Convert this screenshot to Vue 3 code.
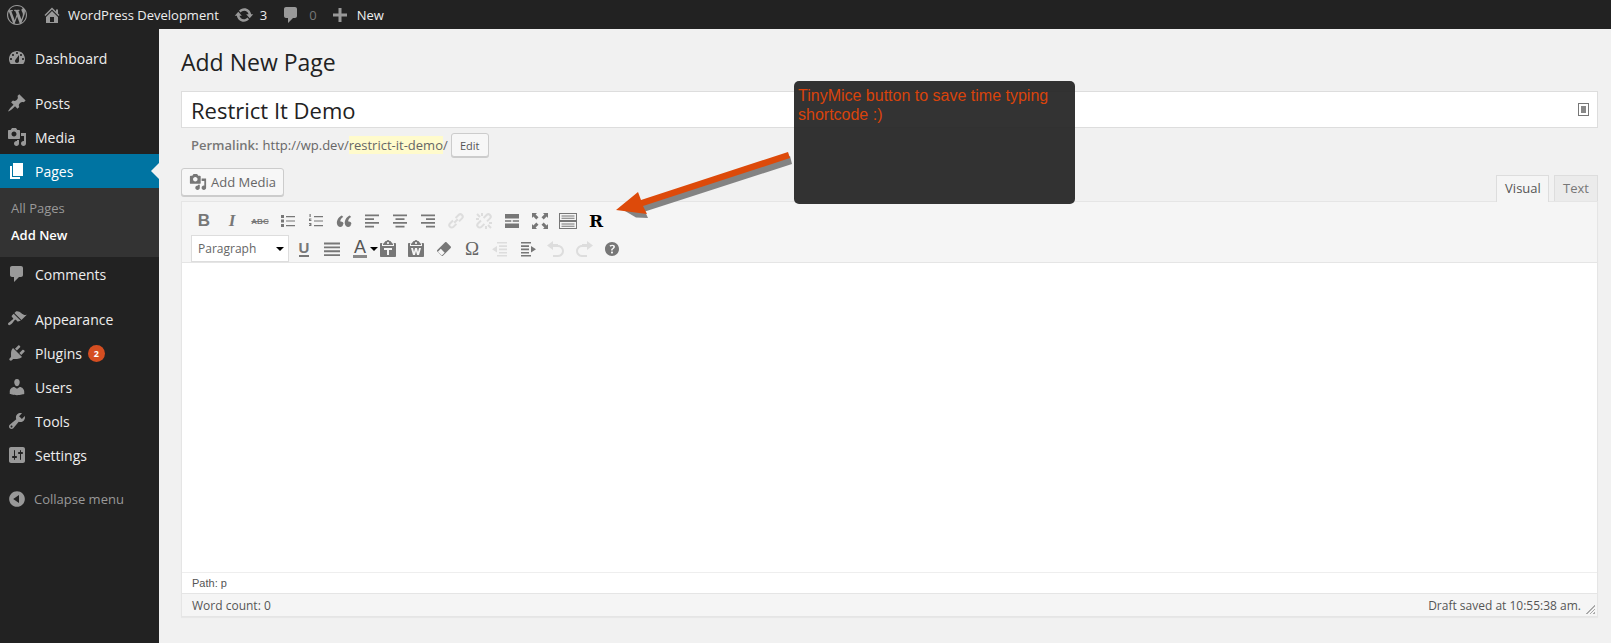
<script setup>
const paths = {
  wp: 'M20 10c0-5.51-4.5-10-10-10C4.48 0 0 4.49 0 10c0 5.52 4.48 10 10 10 5.5 0 10-4.48 10-10zM7.78 15.37L4.37 6.22c.55-.02 1.17-.08 1.17-.08.5-.06.44-1.13-.06-1.11 0 0-1.45.11-2.37.11-.18 0-.37 0-.58-.01C4.12 2.69 6.87 1.11 10 1.11c2.33 0 4.45.87 6.05 2.34-.68-.11-1.65.39-1.65 1.58 0 .74.45 1.36.9 2.1.35.61.55 1.36.55 2.46 0 1.49-1.4 5-1.4 5l-3.03-8.37c.54-.02.82-.17.82-.17.5-.05.44-1.25-.06-1.22 0 0-1.44.12-2.38.12-.87 0-2.33-.12-2.33-.12-.5-.03-.56 1.2-.06 1.22l.92.08 1.26 3.41zM17.41 10c.24-.64.74-1.87.43-4.25.7 1.29 1.05 2.71 1.05 4.25 0 3.29-1.73 6.24-4.4 7.78.97-2.59 1.94-5.2 2.92-7.78zM6.1 18.09C3.12 16.65 1.11 13.53 1.11 10c0-1.3.23-2.48.72-3.59C3.25 10.3 4.67 14.2 6.1 18.09zm4.03-6.63l2.58 6.98c-.86.29-1.76.45-2.71.45-.79 0-1.57-.11-2.29-.33.81-2.38 1.62-4.74 2.42-7.1z',
  home: 'M16 8.5l1.53 1.53-1.06 1.06L10 4.62l-6.47 6.47-1.06-1.06L10 2.5l4 4v-2h2v4zm-6-2.46l6 5.99V18H4v-5.97zM12 17v-5H8v5h4z',
  update: 'M10.2 3.28c3.53 0 6.43 2.61 6.92 6h2.08l-3.5 4-3.5-4h2.32c-.45-1.97-2.21-3.45-4.32-3.45-1.45 0-2.73.71-3.54 1.78L4.95 5.66C6.23 4.2 8.11 3.28 10.2 3.28zm-.4 13.44c-3.52 0-6.43-2.61-6.92-6H.8l3.5-4c1.17 1.33 2.33 2.67 3.5 4H5.48c.45 1.97 2.21 3.45 4.32 3.45 1.45 0 2.73-.71 3.54-1.78l1.71 1.95c-1.28 1.46-3.15 2.38-5.25 2.38z',
  comment: 'M5 2h9c1.1 0 2 .9 2 2v7c0 1.1-.9 2-2 2h-2l-5 5v-5H5c-1.1 0-2-.9-2-2V4c0-1.1.9-2 2-2z',
  plus: 'M17 8.5v3h-5.5V17h-3v-5.5H3v-3h5.5V3h3v5.5z',
  dashboard: 'M3.76 16h12.48c1.1-1.37 1.76-3.11 1.76-5 0-4.42-3.58-8-8-8s-8 3.58-8 8c0 1.89.66 3.63 1.76 5zM10 4c.55 0 1 .45 1 1s-.45 1-1 1-1-.45-1-1 .45-1 1-1zM6 6c.55 0 1 .45 1 1s-.45 1-1 1-1-.45-1-1 .45-1 1-1zm8 0c.55 0 1 .45 1 1s-.45 1-1 1-1-.45-1-1 .45-1 1-1zm-5.37 5.55L12 7v6c0 1.1-.9 2-2 2s-2-.9-2-2c0-.57.24-1.08.63-1.45zM4 10c.55 0 1 .45 1 1s-.45 1-1 1-1-.45-1-1 .45-1 1-1zm12 0c.55 0 1 .45 1 1s-.45 1-1 1-1-.45-1-1 .45-1 1-1z',
  pin: 'M10.44 3.02l1.82-1.82 6.36 6.35-1.83 1.82c-1.05-.68-2.48-.57-3.41.36l-.75.75c-.92.93-1.04 2.35-.35 3.41l-1.83 1.82-2.41-2.41-2.8 2.79c-.42.42-3.38 2.71-3.8 2.29s1.86-3.39 2.28-3.81l2.79-2.79L4.1 9.36l1.83-1.82c1.05.69 2.48.57 3.4-.36l.75-.75c.93-.92 1.05-2.35.36-3.41z',
  media: 'M13 11V4c0-.55-.45-1-1-1h-1.67L9 1H5L3.67 3H2c-.55 0-1 .45-1 1v7c0 .55.45 1 1 1h10c.55 0 1-.45 1-1zM7 4.5c1.38 0 2.5 1.12 2.5 2.5S8.38 9.5 7 9.5 4.5 8.38 4.5 7 5.62 4.5 7 4.5zM14 6h5v10.5c0 1.38-1.12 2.5-2.5 2.5S14 17.88 14 16.5s1.12-2.5 2.5-2.5c.17 0 .34.02.5.05V9h-3V6zm-4 8.05V13h2v3.5c0 1.38-1.12 2.5-2.5 2.5S7 17.88 7 16.5 8.12 14 9.5 14c.17 0 .34.02.5.05z',
  page: 'M6 15V2h10v13H6zm-1 1h8v2H3V5h2v11z',
  appearance: 'M14.48 11.06L7.41 3.99l1.5-1.5c.5-.56 2.3-.47 3.51.32 1.21.8 1.43 1.28 2.91 2.1 1.18.64 2.45 1.26 4.45.85zm-.71.71L6.7 4.7 4.93 6.47c-.39.39-.39 1.02 0 1.41l1.06 1.06c.39.39.39 1.03 0 1.42-.6.6-1.43 1.11-2.21 1.69-.35.26-.7.53-1.01.84C1.43 13.23.4 14.84 1.33 15.77c.92.93 2.53-.1 3.87-1.44.31-.31.58-.66.85-1.02.57-.78 1.08-1.61 1.69-2.21.39-.39 1.02-.39 1.41 0l1.06 1.06c.39.39 1.02.39 1.41 0z',
  plugins: 'M13.11 4.36L9.87 7.6 8 5.73l3.24-3.24c.35-.34 1.05-.2 1.56.32.52.51.66 1.21.31 1.55zm-8 1.77l.91-1.12 9.01 9.01-1.19.84c-.71.71-2.63 1.16-3.82 1.16H6.14L4.9 17.26c-.59.59-1.54.59-2.12 0-.59-.58-.59-1.53 0-2.12l1.24-1.24v-3.88c0-1.13.4-3.19 1.09-3.89zm7.26 3.97l3.24-3.24c.34-.35 1.04-.21 1.55.31.52.51.66 1.21.31 1.55l-3.24 3.25z',
  users: 'M10 9.25c-2.27 0-2.73-3.44-2.73-3.44C7 4.02 7.82 2 9.97 2c2.16 0 2.98 2.02 2.71 3.81 0 0-.41 3.44-2.68 3.44zm0 2.57L12.72 10c2.39 0 4.52 2.33 4.52 4.53v2.49s-3.65 1.13-7.24 1.13c-3.65 0-7.24-1.13-7.24-1.13v-2.49c0-2.25 1.94-4.48 4.47-4.48z',
  tools: 'M16.68 9.77c-1.34 1.34-3.3 1.67-4.95.99l-5.41 6.52c-.99.99-2.59.99-3.58 0s-.99-2.59 0-3.57l6.52-5.42c-.68-1.65-.35-3.61.99-4.95 1.28-1.28 3.12-1.62 4.72-1.06l-2.89 2.89 2.82 2.82 2.86-2.87c.53 1.58.18 3.39-1.08 4.65zM3.81 16.21c.4.39 1.04.39 1.43 0 .4-.4.4-1.04 0-1.43-.39-.4-1.03-.4-1.43 0-.39.39-.39 1.03 0 1.43z',
  settings: 'M18 16V4c0-1.1-.9-2-2-2H4c-1.1 0-2 .9-2 2v12c0 1.1.9 2 2 2h12c1.1 0 2-.9 2-2zM8 11h1c.55 0 1 .45 1 1s-.45 1-1 1H8v1.5c0 .28-.22.5-.5.5s-.5-.22-.5-.5V13H6c-.55 0-1-.45-1-1s.45-1 1-1h1V5.5c0-.28.22-.5.5-.5s.5.22.5.5V11zm5-2h-1c-.55 0-1-.45-1-1s.45-1 1-1h1V5.5c0-.28.22-.5.5-.5s.5.22.5.5V7h1c.55 0 1 .45 1 1s-.45 1-1 1h-1v5.5c0 .28-.22.5-.5.5s-.5-.22-.5-.5V9z',
  collapse: 'M10 2.16c4.33 0 7.84 3.51 7.84 7.84s-3.51 7.84-7.84 7.84S2.16 14.33 2.16 10 5.71 2.16 10 2.16zm2 11.72V6.12L6.18 9.97z',
  ul: 'M3 4h3v3H3zM8 5h9v1.2H8zM3 8.5h3v3H3zM8 9.4h9v1.2H8zM3 13h3v3H3zM8 14h9v1.2H8z',
  ol: 'M3.5 3h1.2v3H3.5zM3 7.5h2.4v1H4.2v.5h1.2v1H3zM3 12h2.4v3H3v-1h1.2v-.4H3.4v-.6h.8V13H3zM8 5h9v1.2H8zM8 9.4h9v1.2H8zM8 14h9v1.2H8z',
  quote: 'M9.49 13.22c0-.74-.2-1.38-.61-1.9-.62-.78-1.83-.88-2.53-.72-.29-1.65 1.11-3.75 2.92-4.65L7.88 4.5c-2.73 1.3-5.42 4.28-4.96 8.05.29 2.37 1.67 3.45 3.3 3.45.82 0 1.49-.24 2.01-.73.52-.48.76-1.17.76-2.05zM17.39 13.22c0-.74-.2-1.38-.61-1.9-.62-.78-1.83-.88-2.53-.72-.29-1.65 1.11-3.75 2.92-4.65L15.78 4.5c-2.73 1.3-5.42 4.28-4.96 8.05.29 2.37 1.67 3.45 3.3 3.45.82 0 1.49-.24 2.01-.73.52-.48.76-1.17.76-2.05z',
  alignleft: 'M3 3.5h14v1.7H3zM3 7.2h9v1.7H3zM3 11h14v1.7H3zM3 14.8h9v1.7H3z',
  aligncenter: 'M3 3.5h14v1.7H3zM5.5 7.2h9v1.7h-9zM3 11h14v1.7H3zM5.5 14.8h9v1.7h-9z',
  alignright: 'M3 3.5h14v1.7H3zM8 7.2h9v1.7H8zM3 11h14v1.7H3zM8 14.8h9v1.7H8z',
  hr: 'M3 3h14v4.5H3zM3 9.3h6.3v1.5H3zM10.7 9.3H17v1.5h-6.3zM3 12.5h14V17H3z',
  full: 'M2 2h5L5.6 3.4 8.5 6.3 6.3 8.5 3.4 5.6 2 7zM18 2v5l-1.4-1.4-2.9 2.9-2.2-2.2 2.9-2.9L13 2zM2 18v-5l1.4 1.4 2.9-2.9 2.2 2.2-2.9 2.9L7 18zM18 18h-5l1.4-1.4-2.9-2.9 2.2-2.2 2.9 2.9L18 13z',
  kbd: 'M1 2h18v16H1zM2 3v6h16V3zm0 8v6h16v-6zM3.5 4.5h13v1h-13zM3.5 6.8h13v1h-13zM3.5 12.5h13v1h-13zM3.5 14.8h13v1h-13z',
  justify: 'M2 3.5h16v1.9H2zM2 7.4h16v1.9H2zM2 11.3h16v1.9H2zM2 15.2h16v1.9H2z',
  pastetext: 'M12.38 2L15 5v1H5V5l2.62-3h.88c.27-.6.81-1 1.5-1s1.23.4 1.5 1h.88zM10 5c.55 0 1-.45 1-1s-.45-1-1-1-1 .45-1 1 .45 1 1 1zm5.45-1H17c.55 0 1 .45 1 1v12c0 .55-.45 1-1 1H3c-.55 0-1-.45-1-1V5c0-.55.45-1 1-1h1.55L4 4.63V7h12V4.63zM14 11V9H6v2h3v5h2v-5h3z',
  pasteword: 'M12.38 2L15 5v1H5V5l2.62-3h.88c.27-.6.81-1 1.5-1s1.23.4 1.5 1h.88zM10 5c.55 0 1-.45 1-1s-.45-1-1-1-1 .45-1 1 .45 1 1 1zm5.45-1H17c.55 0 1 .45 1 1v12c0 .55-.45 1-1 1H3c-.55 0-1-.45-1-1V5c0-.55.45-1 1-1h1.55L4 4.63V7h12V4.63zM11 16h2l2-7h-2l-1 4-1-4H9l-1 4-1-4H5l2 7h2l1-4z',
  eraser: 'M12.5 3.3l4.2 4.2c.4.4.4 1 0 1.4l-7.8 7.8c-.4.4-1 .4-1.4 0l-4.2-4.2c-.4-.4-.4-1 0-1.4l7.8-7.8c.4-.4 1-.4 1.4 0zM6.8 9.8l-2.9 2.9 3.9 3.9 2.9-2.9z',
  outdent: 'M7 3h10v1.6H7zM9 6.3h8v1.6H9zM9 9.6h8v1.6H9zM9 12.9h8v1.6H9zM7 16h10v1.6H7zM7 7l-5 3.3 5 3.3z',
  indent: 'M3 3h10v1.6H3zM3 6.3h8v1.6H3zM3 9.6h8v1.6H3zM3 12.9h8v1.6H3zM3 16h10v1.6H3zM13 7l5 3.3-5 3.3z',
  undo: 'M12 5H7V2L1 6.5 7 11V8h5c2.2 0 4 1.8 4 4s-1.8 4-4 4H7v2h5c3.3 0 6-2.7 6-6s-2.7-6-6-6z',
  redo: 'M8 5h5V2l6 4.5-6 4.5V8H8c-2.2 0-4 1.8-4 4s1.8 4 4 4h5v2H8c-3.3 0-6-2.7-6-6s2.7-6 6-6z',
  help: 'M17 10c0-3.87-3.14-7-7-7-3.87 0-7 3.13-7 7s3.13 7 7 7c3.86 0 7-3.13 7-7zm-6.3 1.48H9.14v-.43c0-.38.08-.7.24-.98s.46-.57.88-.89c.41-.29.68-.53.81-.71.14-.18.2-.39.2-.62 0-.25-.09-.44-.28-.58-.19-.13-.45-.19-.79-.19-.58 0-1.25.19-2 .57l-.64-1.28c.87-.49 1.8-.74 2.77-.74.81 0 1.45.2 1.92.58.48.39.71.91.71 1.55 0 .43-.09.8-.29 1.11-.19.32-.57.67-1.11 1.06-.38.28-.61.49-.71.63-.1.15-.15.34-.15.57v.35zm-1.47 2.74c-.18-.17-.27-.42-.27-.73 0-.33.08-.58.26-.75s.43-.25.77-.25c.32 0 .57.09.75.26s.27.42.27.74c0 .3-.09.55-.27.72-.18.18-.43.27-.75.27-.33 0-.58-.09-.76-.26z',
  link: 'M8.2 11.8l3.6-3.6M7 9.5l-3 3a2.4 2.4 0 0 0 3.4 3.4l3-3M9.6 7l3-3A2.4 2.4 0 0 1 16 7.4l-3 3',
  unlink: 'M7 9.5l-3 3a2.4 2.4 0 0 0 3.4 3.4l3-3M9.6 7l3-3A2.4 2.4 0 0 1 16 7.4l-3 3M3 3l3 3M17 17l-3-3M8 2v3M2 8h3M12 18v-3M18 12h-3',
}

const menu = [
  { label: 'Dashboard', icon: 'dashboard', gap: true },
  { label: 'Posts', icon: 'pin' },
  { label: 'Media', icon: 'media' },
  { label: 'Pages', icon: 'page', active: true, sub: ['All Pages', 'Add New'] },
  { label: 'Comments', icon: 'comment', gap: true },
  { label: 'Appearance', icon: 'appearance' },
  { label: 'Plugins', icon: 'plugins', badge: 2 },
  { label: 'Users', icon: 'users' },
  { label: 'Tools', icon: 'tools' },
  { label: 'Settings', icon: 'settings' },
]

const row1 = [
  { text: 'B', cls: 'g-bold' },
  { text: 'I', cls: 'g-italic' },
  { text: 'ABC', cls: 'g-strike' },
  { icon: 'ul' },
  { icon: 'ol' },
  { icon: 'quote' },
  { icon: 'alignleft' },
  { icon: 'aligncenter' },
  { icon: 'alignright' },
  { icon: 'link', line: true, off: true },
  { icon: 'unlink', line: true, off: true },
  { icon: 'hr' },
  { icon: 'full' },
  { icon: 'kbd' },
  { text: 'R', cls: 'g-r' },
]

const row2 = [
  { text: 'U', cls: 'g-under' },
  { icon: 'justify' },
  { text: 'A', cls: 'g-color', caret: true },
  { icon: 'pastetext' },
  { icon: 'pasteword' },
  { icon: 'eraser' },
  { text: 'Ω', cls: 'g-omega' },
  { icon: 'outdent', off: true },
  { icon: 'indent' },
  { icon: 'undo', off: true },
  { icon: 'redo', off: true },
  { icon: 'help' },
]
</script>

<template>
  <div class="page">
    <header class="adminbar">
      <svg class="bar-logo" viewBox="0 0 20 20"><path :d="paths.wp" /></svg>
      <a class="bar-item site">
        <svg viewBox="0 0 20 20"><path :d="paths.home" /></svg>
        <span>WordPress Development</span>
      </a>
      <a class="bar-item updates">
        <svg viewBox="0 0 20 20"><path :d="paths.update" /></svg>
        <span>3</span>
      </a>
      <a class="bar-item comments">
        <svg viewBox="0 0 20 20"><path :d="paths.comment" /></svg>
        <span class="muted">0</span>
      </a>
      <a class="bar-item add">
        <svg viewBox="0 0 20 20"><path :d="paths.plus" /></svg>
        <span>New</span>
      </a>
    </header>

    <div class="body">
      <nav class="sidebar">
        <template v-for="item in menu" :key="item.label">
          <a class="menu-item" :class="{ active: item.active }">
            <svg viewBox="0 0 20 20"><path fill-rule="evenodd" :d="paths[item.icon]" /></svg>
            <span>{{ item.label }}</span>
            <b v-if="item.badge" class="badge">{{ item.badge }}</b>
          </a>
          <ul v-if="item.sub" class="submenu">
            <li>{{ item.sub[0] }}</li>
            <li class="current">{{ item.sub[1] }}</li>
          </ul>
          <div v-if="item.gap" class="separator"></div>
        </template>
        <a class="collapse">
          <svg viewBox="0 0 20 20"><path :d="paths.collapse" /></svg>
          <span>Collapse menu</span>
        </a>
      </nav>

      <main class="content">
        <h1>Add New Page</h1>

        <div class="title-box">
          <span>Restrict It Demo</span>
          <span class="title-icon"><i></i></span>
        </div>

        <div class="permalink">
          <strong>Permalink:</strong>
          <span class="url">http://wp.dev/<em>restrict-it-demo</em>/</span>
          <button type="button" class="btn-edit">Edit</button>
        </div>

        <div class="editor-head">
          <button type="button" class="btn-media">
            <svg viewBox="0 0 20 20"><path fill-rule="evenodd" :d="paths.media" /></svg>
            Add Media
          </button>
          <div class="tabs">
            <span class="tab on">Visual</span>
            <span class="tab">Text</span>
          </div>
        </div>

        <section class="editor">
          <div class="toolbar">
            <div class="tool-row">
              <span v-for="(t, i) in row1" :key="i" class="tool" :class="{ off: t.off }">
                <span v-if="t.text" :class="t.cls">{{ t.text }}</span>
                <svg v-else-if="t.line" class="line" viewBox="0 0 20 20"><path :d="paths[t.icon]" /></svg>
                <svg v-else viewBox="0 0 20 20"><path fill-rule="evenodd" :d="paths[t.icon]" /></svg>
              </span>
            </div>
            <div class="tool-row second">
              <div class="format-select">Paragraph<i class="caret"></i></div>
              <span v-for="(t, i) in row2" :key="i" class="tool" :class="{ off: t.off, wide: t.caret }">
                <span v-if="t.text" :class="t.cls">{{ t.text }}</span>
                <svg v-else viewBox="0 0 20 20"><path fill-rule="evenodd" :d="paths[t.icon]" /></svg>
                <i v-if="t.caret" class="caret small"></i>
              </span>
            </div>
          </div>
          <div class="edit-area"></div>
          <div class="path-row">Path: p</div>
          <div class="status-row">
            <span>Word count: 0</span>
            <span class="saved">Draft saved at 10:55:38 am.</span>
            <i class="grip"></i>
          </div>
        </section>

        <div class="note">TinyMice button to save time typing shortcode :)</div>
        <svg class="arrow" viewBox="0 0 190 70" width="190" height="70">
          <polygon points="178,12 31,59.5 34,66 22,65.5 11,59 24,48 26,53 176,4" fill="#777" transform="translate(1,2)" opacity=".9" />
          <polygon points="177,8 30,56 34,64 3,60 25,42 28,50 175,2" fill="#dd4a0a" />
        </svg>
      </main>
    </div>
  </div>
</template>

<style>
html, body {
  margin: 0;
  background: #f1f1f1;
}
</style>

<style scoped>
.page {
  width: 1611px;
  height: 643px;
  overflow: hidden;
  display: flex;
  flex-direction: column;
  font-family: "Open Sans", sans-serif;
  font-size: 13px;
  color: #444;
}

svg {
  fill: currentColor;
  flex: none;
}

/* admin bar */
.adminbar {
  height: 29px;
  flex: none;
  background: #222;
  color: #eee;
  display: flex;
  align-items: center;
  padding-left: 7px;
}

.bar-logo {
  width: 20px;
  height: 20px;
  color: #999;
}

.bar-item {
  display: flex;
  align-items: center;
}

.bar-item svg {
  width: 20px;
  height: 20px;
  color: #999;
}

.site {
  margin-left: 15px;
  gap: 6px;
}

.updates {
  margin-left: 15px;
  gap: 6px;
}

.comments {
  margin-left: 14px;
  gap: 8px;
}

.add {
  margin-left: 13px;
  gap: 7px;
}

.muted {
  color: #777;
}

.body {
  flex: 1;
  display: flex;
  min-height: 0;
}

/* side menu */
.sidebar {
  width: 159px;
  flex: none;
  background: #222;
  padding-top: 12px;
  box-sizing: border-box;
}

.menu-item {
  position: relative;
  height: 34px;
  display: flex;
  align-items: center;
  color: #eee;
  font-size: 14px;
  padding-left: 7px;
}

.menu-item svg {
  width: 20px;
  height: 20px;
  margin-right: 8px;
  color: #999;
}

.menu-item.active {
  background: #0074a2;
  color: #fff;
}

.menu-item.active svg {
  color: #fff;
}

.menu-item.active::after {
  content: "";
  position: absolute;
  right: 0;
  top: 9px;
  border: 8px solid transparent;
  border-right-color: #f1f1f1;
  border-left-width: 0;
}

.badge {
  margin-left: 6px;
  width: 17px;
  height: 17px;
  border-radius: 50%;
  background: #d54e21;
  color: #fff;
  font-size: 9px;
  line-height: 17px;
  text-align: center;
}

.separator {
  height: 11px;
}

.submenu {
  list-style: none;
  margin: 0;
  padding: 7px 0 8px 11px;
  background: #333;
  color: #999;
  font-size: 13px;
  line-height: 27px;
}

.submenu .current {
  color: #fff;
  font-weight: 600;
}

.collapse {
  display: flex;
  align-items: center;
  margin-top: 10px;
  height: 34px;
  padding-left: 7px;
  gap: 7px;
  color: #999;
  font-size: 13px;
}

.collapse svg {
  width: 20px;
  height: 20px;
}

/* content */
.content {
  position: relative;
  flex: 1;
  min-width: 0;
  padding: 0 13px 0 22px;
  box-sizing: border-box;
}

h1 {
  margin: 0;
  padding-top: 17px;
  font-size: 23px;
  font-weight: 400;
  line-height: 32px;
  color: #222;
}

.title-box {
  height: 37px;
  margin-top: 13px;
  box-sizing: border-box;
  padding: 0 8px 0 9px;
  background: #fff;
  border: 1px solid #ddd;
  display: flex;
  align-items: center;
  justify-content: space-between;
  font-size: 22px;
  color: #222;
}

.title-icon {
  width: 9px;
  height: 11px;
  border: 1.5px solid #777;
  display: flex;
  align-items: center;
  justify-content: center;
}

.title-icon i {
  width: 5px;
  height: 7px;
  background: #888;
}

.permalink {
  height: 24px;
  margin-top: 5px;
  padding-left: 10px;
  display: flex;
  align-items: center;
  color: #666;
}

.permalink strong {
  font-weight: 600;
  color: #777;
  margin-right: 4px;
}

.url em {
  font-style: normal;
  background: #fffbcc;
}

.btn-edit {
  margin-left: 3px;
  height: 24px;
  width: 38px;
  padding: 0;
  border: 1px solid #ccc;
  border-radius: 3px;
  background: #f7f7f7;
  box-shadow: 0 1px 0 #ccc;
  font: 11px "Open Sans", sans-serif;
  color: #555;
}

.editor-head {
  margin-top: 11px;
  display: flex;
  justify-content: space-between;
  align-items: flex-end;
  height: 33px;
}

.btn-media {
  align-self: flex-start;
  height: 28px;
  width: 103px;
  padding: 0 0 0 7px;
  display: flex;
  align-items: center;
  gap: 4px;
  border: 1px solid #ccc;
  border-radius: 3px;
  background: #f7f7f7;
  box-shadow: 0 1px 0 #ccc;
  font: 13px "Open Sans", sans-serif;
  color: #666;
}

.btn-media svg {
  width: 18px;
  height: 18px;
  color: #777;
}

.tabs {
  display: flex;
  gap: 5px;
  font-size: 13px;
}

.tab {
  height: 26px;
  box-sizing: border-box;
  padding: 0 8px;
  line-height: 24px;
  border: 1px solid #ddd;
  border-bottom: none;
  background: #ebebeb;
  color: #777;
  text-align: center;
}

.tab.on {
  width: 53px;
  height: 27px;
  background: #f5f5f5;
  color: #555;
  margin-bottom: -1px;
  position: relative;
}

.editor {
  border: 1px solid #e5e5e5;
  background: #fff;
  box-shadow: 0 1px 1px rgba(0, 0, 0, .04);
}

.toolbar {
  background: #f5f5f5;
  border-bottom: 1px solid #e5e5e5;
  height: 61px;
  padding: 7px 0 0 8px;
  box-sizing: border-box;
}

.tool-row {
  display: flex;
  align-items: center;
  height: 24px;
}

.tool-row.second {
  height: 29px;
  margin-top: 1px;
  padding-left: 1px;
}

.tool {
  width: 28px;
  height: 24px;
  flex: none;
  display: flex;
  align-items: center;
  justify-content: center;
  color: #777;
  font-family: "DejaVu Sans", sans-serif;
}

.tool svg {
  width: 20px;
  height: 20px;
}

.tool svg.line {
  fill: none;
  stroke: currentColor;
  stroke-width: 2;
}

.tool.off {
  color: #ddd;
}

.tool.wide {
  position: relative;
}

.g-bold {
  font: 700 17px "Liberation Sans", sans-serif;
}

.g-italic {
  font: italic 700 17px "Liberation Serif", serif;
}

.g-strike {
  font: 700 8px "Liberation Sans", sans-serif;
  text-decoration: line-through;
}

.g-r {
  font: 900 17px "DejaVu Serif", serif;
  color: #000;
}

.g-under {
  font: 700 15px "Liberation Sans", sans-serif;
  border-bottom: 2px solid #777;
  line-height: 14px;
}

.g-color {
  font: 400 18px "Liberation Sans", sans-serif;
  border-bottom: 3px solid #888;
  line-height: 15px;
  color: #555;
  padding: 0 1px;
}

.g-omega {
  font: 400 19px "Liberation Serif", serif;
  color: #666;
}

.format-select {
  position: relative;
  width: 98px;
  height: 27px;
  margin-right: 1px;
  box-sizing: border-box;
  padding-left: 6px;
  line-height: 25px;
  border: 1px solid #ddd;
  background: #fff;
  font-size: 12px;
  color: #666;
  flex: none;
}

.caret {
  position: absolute;
  right: 4px;
  top: 11px;
  border: 4px solid transparent;
  border-top: 4px solid #000;
  border-bottom: 0;
}

.caret.small {
  right: -4px;
  top: 10px;
}

.edit-area {
  height: 309px;
}

.path-row {
  height: 21px;
  box-sizing: border-box;
  padding-left: 10px;
  line-height: 20px;
  border-top: 1px solid #eee;
  font: 11px/20px "Liberation Sans", sans-serif;
  color: #555;
}

.status-row {
  position: relative;
  height: 23px;
  box-sizing: border-box;
  padding: 0 16px 0 10px;
  background: #f5f5f5;
  border-top: 1px solid #e5e5e5;
  display: flex;
  justify-content: space-between;
  align-items: center;
  font-size: 12px;
  color: #555;
}

.grip {
  position: absolute;
  right: 2px;
  bottom: 2px;
  width: 11px;
  height: 11px;
  background: repeating-linear-gradient(135deg, transparent 0 1.5px, #aaa 1.5px 2.5px);
  clip-path: polygon(100% 0, 100% 100%, 0 100%);
}

/* annotation drawn over the screenshot */
.note {
  position: absolute;
  left: 635px;
  top: 52px;
  width: 281px;
  height: 123px;
  box-sizing: border-box;
  padding: 5px 4px;
  background: rgba(34, 34, 34, .92);
  border-radius: 5px;
  font: 16px/19px "Liberation Sans", sans-serif;
  color: #d9430b;
}

.arrow {
  position: absolute;
  left: 454px;
  top: 121px;
}
</style>
